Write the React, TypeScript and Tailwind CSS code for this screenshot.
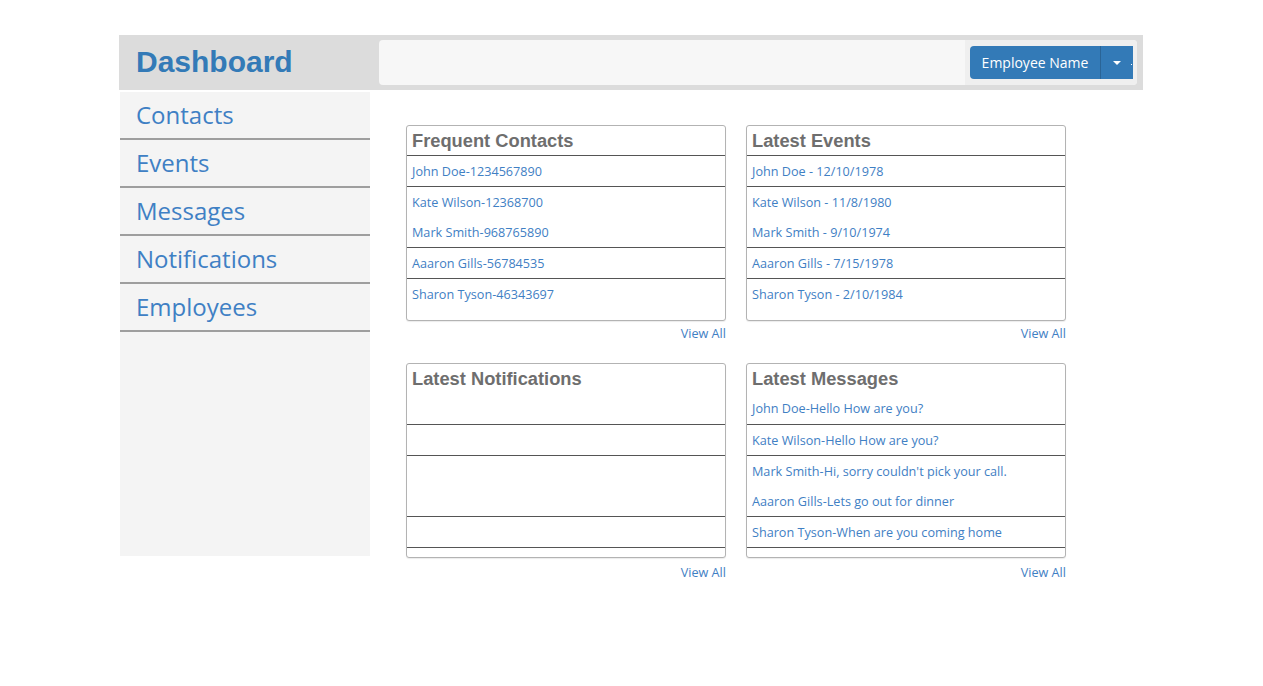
import React from "react";

const body = { fontFamily: '"Open Sans", "Noto Sans", sans-serif' };
const head = { fontFamily: '"Liberation Sans", Arial, sans-serif' };

type Row = { lines: string[]; h: string; border?: boolean };

function Card({ title, titleExtra, titleH, rows }: { title: string; titleExtra?: string; titleH: string; rows: Row[] }) {
  return (
    <div>
      <div className="w-[320px] border border-[#b3b3b3] rounded-[3px] bg-white shadow-[0_1px_1px_rgba(0,0,0,0.08)] overflow-hidden">
        <div className={`${titleH} border-b border-[#555] px-[5px]`}>
          <div className="h-[29px] flex items-center text-[18.3px] font-bold text-[#6e6e6e]" style={head}>
            {title}
          </div>
          {titleExtra && (
            <div className="h-[30px] flex items-center text-[12.65px] text-[#3f80c4]" style={body}>
              {titleExtra}
            </div>
          )}
        </div>
        {rows.map((r, i) => (
          <div key={i} className={`${r.h} px-[5px] ${r.border === false ? "" : "border-b border-[#555]"}`}>
            {r.lines.map((l) => (
              <div key={l} className="h-[30px] flex items-center text-[12.65px] text-[#3f80c4]" style={body}>
                {l}
              </div>
            ))}
          </div>
        ))}
      </div>
    </div>
  );
}

function ViewAll({ cls }: { cls: string }) {
  return (
    <div className={`w-[320px] text-right text-[12.65px] leading-[16px] text-[#3f80c4] ${cls}`} style={body}>
      View All
    </div>
  );
}

export default function App() {
  const nav = ["Contacts", "Events", "Messages", "Notifications", "Employees"];

  return (
    <div className="bg-white min-h-[686px] pt-[35px]">
      <div className="w-[1024px] ml-[119px]">
        {/* Header */}
        <div className="h-[55px] bg-[#dcdcdc] flex items-center">
          <div className="w-[260px] pl-[17px] pb-[3px] text-[30px] font-bold text-[#337ab7]" style={head}>
            Dashboard
          </div>
          <div className="h-[45px] w-[758px] bg-[#f7f7f7] rounded-[4px] flex justify-end overflow-hidden">
            <div className="w-[172px] h-full bg-[#efefef] flex items-center pl-[5px]">
              <div className="flex h-[33px]">
                <div className="w-[130px] bg-[#337ab7] text-white text-[14px] rounded-l-[4px] flex items-center justify-center pb-[1px]" style={body}>
                  Employee Name
                </div>
                <div className="w-[33px] bg-[#337ab7] border-l border-[#2a6496] flex items-center pl-[12px] gap-[10px]">
                  <span className="w-0 h-0 border-l-[4px] border-r-[4px] border-t-[4px] border-l-transparent border-r-transparent border-t-white" />
                  <span className="w-[1px] h-[1px] bg-white mt-[3px]" />
                </div>
              </div>
            </div>
          </div>
        </div>

        <div className="flex mt-[2px]">
          {/* Sidebar */}
          <div className="w-[250px] ml-[1px] h-[464px] bg-[#f4f4f4]">
            {nav.map((n) => (
              <div key={n} className="h-[48px] border-b-2 border-[#9e9e9e] pl-[16px] flex items-center text-[24px] text-[#3f80c4]" style={body}>
                {n}
              </div>
            ))}
          </div>

          {/* Main */}
          <div className="pl-[36px] pt-[33px]">
            <div className="grid grid-cols-[320px_320px] gap-x-[20px]">
              <div>
                <Card
                  title="Frequent Contacts"
                  titleH="h-[30px]"
                  rows={[
                    { lines: ["John Doe-1234567890"], h: "h-[31px]" },
                    { lines: ["Kate Wilson-12368700", "Mark Smith-968765890"], h: "h-[61px]" },
                    { lines: ["Aaaron Gills-56784535"], h: "h-[31px]" },
                    { lines: ["Sharon Tyson-46343697"], h: "h-[41px]", border: false },
                  ]}
                />
                <ViewAll cls="pt-[4px] h-[42px]" />
              </div>
              <div>
                <Card
                  title="Latest Events"
                  titleH="h-[30px]"
                  rows={[
                    { lines: ["John Doe - 12/10/1978"], h: "h-[31px]" },
                    { lines: ["Kate Wilson - 11/8/1980", "Mark Smith - 9/10/1974"], h: "h-[61px]" },
                    { lines: ["Aaaron Gills - 7/15/1978"], h: "h-[31px]" },
                    { lines: ["Sharon Tyson - 2/10/1984"], h: "h-[41px]", border: false },
                  ]}
                />
                <ViewAll cls="pt-[4px] h-[42px]" />
              </div>
              <div>
                <Card
                  title="Latest Notifications"
                  titleH="h-[61px]"
                  rows={[
                    { lines: [], h: "h-[31px]" },
                    { lines: [], h: "h-[61px]" },
                    { lines: [], h: "h-[31px]" },
                    { lines: [], h: "h-[9px]", border: false },
                  ]}
                />
                <ViewAll cls="pt-[6px]" />
              </div>
              <div>
                <Card
                  title="Latest Messages"
                  titleExtra="John Doe-Hello How are you?"
                  titleH="h-[61px]"
                  rows={[
                    { lines: ["Kate Wilson-Hello How are you?"], h: "h-[31px]" },
                    { lines: ["Mark Smith-Hi, sorry couldn't pick your call.", "Aaaron Gills-Lets go out for dinner"], h: "h-[61px]" },
                    { lines: ["Sharon Tyson-When are you coming home"], h: "h-[31px]" },
                    { lines: [], h: "h-[9px]", border: false },
                  ]}
                />
                <ViewAll cls="pt-[6px]" />
              </div>
            </div>
          </div>
        </div>
      </div>
    </div>
  );
}
